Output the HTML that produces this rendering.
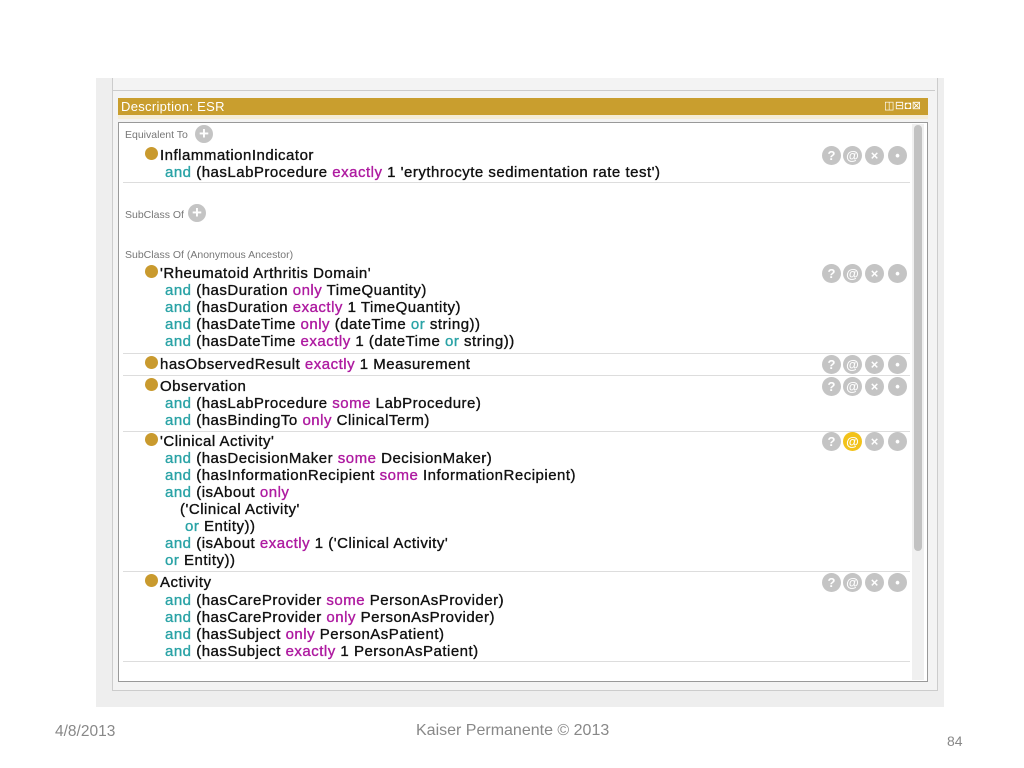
<!DOCTYPE html>
<html><head><meta charset="utf-8"><style>
body{margin:0;width:1024px;height:768px;background:#fff;position:relative;overflow:hidden;font-family:"Liberation Sans",sans-serif}
.a{position:absolute}
.t{position:absolute;margin-top:1px;font-size:15px;letter-spacing:0.5px;color:#111;white-space:pre;line-height:17px;-webkit-text-stroke:0.35px #111}
.k{color:#2aa3a6;-webkit-text-stroke:0.35px #2aa3a6}
.p{color:#ae1aa0;-webkit-text-stroke:0.35px #ae1aa0}
.lbl{position:absolute;font-size:10.5px;color:#777;white-space:pre}
.b{position:absolute;width:13px;height:13px;border-radius:50%;background:#c99a2e}
.ic{position:absolute;width:19px;height:19px;border-radius:50%;background:#c4c4c4;color:#fff;font-size:13px;font-weight:bold;text-align:center;line-height:19px}
.sep{position:absolute;left:123px;width:787px;height:1px;background:#ddd}
.plus{position:absolute;width:18px;height:18px;border-radius:50%;background:#c4c4c4;color:#fff;font-size:17px;font-weight:bold;text-align:center;line-height:18px}
</style></head><body>
<div class="a" style="left:96px;top:78px;width:848px;height:629px;background:#eeeeee"></div>
<div class="a" style="left:112px;top:78px;width:824px;height:612px;border-left:1px solid #ccc;border-right:1px solid #ccc;border-bottom:1px solid #ccc;background:#f3f3f3"></div>
<div class="a" style="left:113px;top:90px;width:822px;height:1px;background:#ccc"></div>
<div class="a" style="left:118px;top:98px;width:810px;height:17px;background:#c99e2e"></div>
<div class="a" style="left:121px;top:98px;font-size:13px;letter-spacing:0.3px;color:#fff;line-height:17px">Description: ESR</div>
<div class="a" style="left:884px;top:101px;font-size:11px;color:#fff;line-height:11px;letter-spacing:0.5px">◫⊟◘⊠</div>
<div class="a" style="left:118px;top:115px;width:810px;height:4px;background:#f5ecd5"></div>
<div class="a" style="left:118px;top:122px;width:808px;height:558px;background:#fff;border:1px solid #999"></div>
<div class="a" style="left:912px;top:124px;width:12px;height:556px;background:#f0f0f0"></div>
<div class="a" style="left:914px;top:125px;width:8px;height:426px;border-radius:4px;background:#c2c2c2"></div>

<div class="lbl" style="left:125px;top:129px">Equivalent To</div>
<div class="plus" style="left:195px;top:125px">+</div>
<div class="lbl" style="left:125px;top:209px">SubClass Of</div>
<div class="plus" style="left:188px;top:204px">+</div>
<div class="lbl" style="left:125px;top:249px">SubClass Of (Anonymous Ancestor)</div>

<div class="b" style="left:145px;top:147px"></div>
<div class="t" style="left:160px;top:146px">InflammationIndicator</div>
<div class="t" style="left:165px;top:163px"><span class="k">and</span> (hasLabProcedure <span class="p">exactly</span> 1 'erythrocyte sedimentation rate test')</div>
<div class="sep" style="top:182px"></div>

<div class="b" style="left:145px;top:265px"></div>
<div class="t" style="left:160px;top:264px">'Rheumatoid Arthritis Domain'</div>
<div class="t" style="left:165px;top:281px"><span class="k">and</span> (hasDuration <span class="p">only</span> TimeQuantity)</div>
<div class="t" style="left:165px;top:298px"><span class="k">and</span> (hasDuration <span class="p">exactly</span> 1 TimeQuantity)</div>
<div class="t" style="left:165px;top:315px"><span class="k">and</span> (hasDateTime <span class="p">only</span> (dateTime <span class="k">or</span> string))</div>
<div class="t" style="left:165px;top:332px"><span class="k">and</span> (hasDateTime <span class="p">exactly</span> 1 (dateTime <span class="k">or</span> string))</div>
<div class="sep" style="top:353px"></div>

<div class="b" style="left:145px;top:356px"></div>
<div class="t" style="left:160px;top:355px">hasObservedResult <span class="p">exactly</span> 1 Measurement</div>
<div class="sep" style="top:375px"></div>

<div class="b" style="left:145px;top:378px"></div>
<div class="t" style="left:160px;top:377px">Observation</div>
<div class="t" style="left:165px;top:394px"><span class="k">and</span> (hasLabProcedure <span class="p">some</span> LabProcedure)</div>
<div class="t" style="left:165px;top:411px"><span class="k">and</span> (hasBindingTo <span class="p">only</span> ClinicalTerm)</div>
<div class="sep" style="top:431px"></div>

<div class="b" style="left:145px;top:433px"></div>
<div class="t" style="left:160px;top:432px">'Clinical Activity'</div>
<div class="t" style="left:165px;top:449px"><span class="k">and</span> (hasDecisionMaker <span class="p">some</span> DecisionMaker)</div>
<div class="t" style="left:165px;top:466px"><span class="k">and</span> (hasInformationRecipient <span class="p">some</span> InformationRecipient)</div>
<div class="t" style="left:165px;top:483px"><span class="k">and</span> (isAbout <span class="p">only</span></div>
<div class="t" style="left:180px;top:500px">('Clinical Activity'</div>
<div class="t" style="left:185px;top:517px"><span class="k">or</span> Entity))</div>
<div class="t" style="left:165px;top:534px"><span class="k">and</span> (isAbout <span class="p">exactly</span> 1 ('Clinical Activity'</div>
<div class="t" style="left:165px;top:551px"><span class="k">or</span> Entity))</div>
<div class="sep" style="top:571px"></div>

<div class="b" style="left:145px;top:574px"></div>
<div class="t" style="left:160px;top:573px">Activity</div>
<div class="t" style="left:165px;top:591px"><span class="k">and</span> (hasCareProvider <span class="p">some</span> PersonAsProvider)</div>
<div class="t" style="left:165px;top:608px"><span class="k">and</span> (hasCareProvider <span class="p">only</span> PersonAsProvider)</div>
<div class="t" style="left:165px;top:625px"><span class="k">and</span> (hasSubject <span class="p">only</span> PersonAsPatient)</div>
<div class="t" style="left:165px;top:642px"><span class="k">and</span> (hasSubject <span class="p">exactly</span> 1 PersonAsPatient)</div>
<div class="sep" style="top:661px"></div>

<div class="ic" style="left:822px;top:146px">?</div><div class="ic" style="left:843px;top:146px">@</div><div class="ic" style="left:865px;top:146px">×</div><div class="ic" style="left:888px;top:146px">•</div>
<div class="ic" style="left:822px;top:264px">?</div><div class="ic" style="left:843px;top:264px">@</div><div class="ic" style="left:865px;top:264px">×</div><div class="ic" style="left:888px;top:264px">•</div>
<div class="ic" style="left:822px;top:355px">?</div><div class="ic" style="left:843px;top:355px">@</div><div class="ic" style="left:865px;top:355px">×</div><div class="ic" style="left:888px;top:355px">•</div>
<div class="ic" style="left:822px;top:377px">?</div><div class="ic" style="left:843px;top:377px">@</div><div class="ic" style="left:865px;top:377px">×</div><div class="ic" style="left:888px;top:377px">•</div>
<div class="ic" style="left:822px;top:432px">?</div><div class="ic" style="left:843px;top:432px;background:#f2c21a">@</div><div class="ic" style="left:865px;top:432px">×</div><div class="ic" style="left:888px;top:432px">•</div>
<div class="ic" style="left:822px;top:573px">?</div><div class="ic" style="left:843px;top:573px">@</div><div class="ic" style="left:865px;top:573px">×</div><div class="ic" style="left:888px;top:573px">•</div>

<div class="a" style="left:55px;top:723px;font-size:15.5px;color:#888">4/8/2013</div>
<div class="a" style="left:416px;top:722px;font-size:16px;color:#888">Kaiser Permanente © 2013</div>
<div class="a" style="left:947px;top:733px;font-size:14px;color:#888">84</div>
</body></html>
